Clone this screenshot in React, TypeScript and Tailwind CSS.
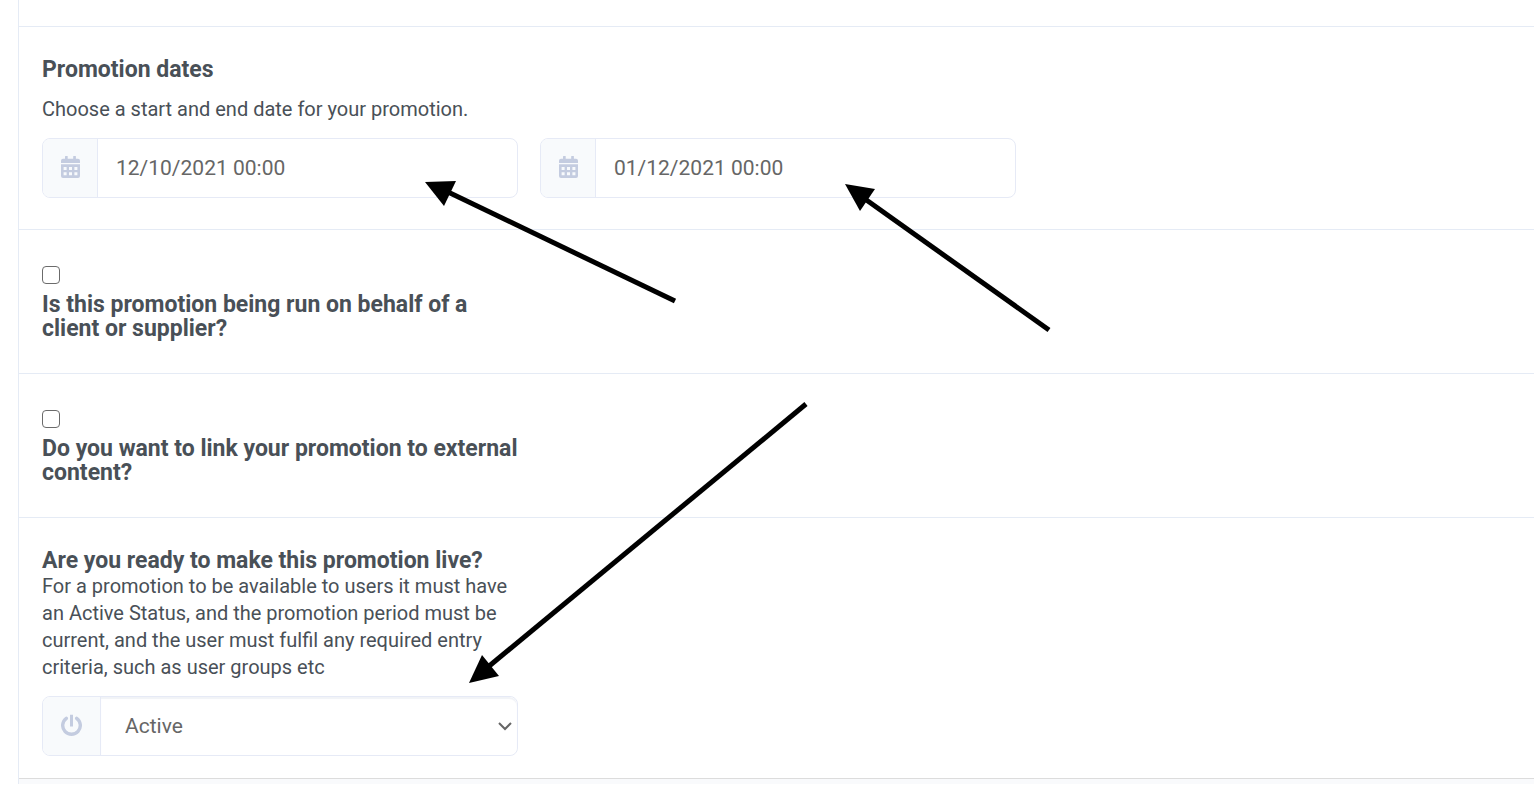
import React from "react";

const dates = [
  { id: "start-date", label: "Start date", value: "12/10/2021 00:00" },
  { id: "end-date", label: "End date", value: "01/12/2021 00:00" },
];

const questions = [
  {
    id: "behalf",
    label: "Is this promotion being run on behalf of a client or supplier?",
  },
  {
    id: "external",
    label: "Do you want to link your promotion to external content?",
  },
];

// tip and the two back corners of the head, then the shaft
const arrows = [
  { head: "425,182 456,181 444,206", x1: 448, y1: 192, x2: 675, y2: 301 },
  { head: "845,184 875,189 860,211", x1: 865, y1: 199, x2: 1049, y2: 330 },
  { head: "469,683 482,655 499,676", x1: 488, y1: 667, x2: 806, y2: 404 },
];

const CalendarIcon = () => (
  <svg width="19" height="22" viewBox="0 0 19 22" fill="currentColor" aria-hidden="true">
    <rect x="4" y="0" width="2.7" height="5" rx="0.6" />
    <rect x="12.2" y="0" width="2.7" height="5" rx="0.6" />
    <path d="M2 2.8h15a2 2 0 0 1 2 2V7H0V4.800a2 2 0 0 1 2-2z" />
    <path
      fillRule="evenodd"
      d="M0 8.200h19V20a2 2 0 0 1-2 2H2a2 2 0 0 1-2-2zM2.600 11v3h3v-3zM8 11v3h3v-3zM13.400 11v3h3v-3zM2.600 16.200v3h3v-3zM8 16.200v3h3v-3zM13.400 16.200v3h3v-3z"
    />
  </svg>
);

const PowerIcon = () => (
  <svg
    width="21"
    height="22"
    viewBox="0 0 21 22"
    fill="none"
    stroke="currentColor"
    strokeWidth="3.4"
    strokeLinecap="round"
    aria-hidden="true"
  >
    <path d="M5.300 4.300a8.800 8.800 0 1 0 10.400 0" />
    <path d="M10.500 2.300v8.700" strokeLinecap="square" strokeWidth="3" />
  </svg>
);

const Section = ({
  className = "",
  children,
}: {
  className?: string;
  children?: React.ReactNode;
}) => (
  <section
    className={`grid grid-cols-3 gap-x-[22px] border-b pl-[23px] pr-5 ${className}`}
  >
    {children}
  </section>
);

const Arrows = () => (
  <svg
    className="pointer-events-none absolute left-0 top-0"
    width="1534"
    height="785"
    viewBox="0 0 1534 785"
    aria-hidden="true"
  >
    {arrows.map((a) => (
      <g key={a.head}>
        <line x1={a.x1} y1={a.y1} x2={a.x2} y2={a.y2} stroke="#000" strokeWidth="5" />
        <polygon points={a.head} />
      </g>
    ))}
  </svg>
);

const App = () => {
  return (
    <div className="relative overflow-hidden bg-white font-['Roboto',sans-serif] text-[#495057]">
      <main className="ml-[18px] border-l border-[#e5ebf5]">
        <Section className="border-[#e5ebf5] pt-[26px]" />

        <Section className="border-[#e5ebf5] py-[31px]">
          <div className="col-span-3 mb-[15px]">
            <h2 className="text-[23px] leading-6 font-bold">Promotion dates</h2>
            <p className="mt-[14px] text-[20px] leading-[27px]">
              Choose a start and end date for your promotion.
            </p>
          </div>
          {dates.map((item) => (
            <div
              key={item.id}
              className="flex h-[60px] overflow-hidden rounded-lg border border-[#e6eaf6]"
            >
              <label
                htmlFor={item.id}
                aria-label={item.label}
                className="flex w-[55px] shrink-0 items-center justify-center border-r border-[#e6eaf6] bg-[#f8fafc] pb-0.5 text-[#c4cce0]"
              >
                <CalendarIcon />
              </label>
              <input
                id={item.id}
                type="text"
                defaultValue={item.value}
                className="w-full min-w-0 px-[18px] pt-0.5 text-[21px] text-[#666] outline-none"
              />
            </div>
          ))}
        </Section>

        {questions.map((item) => (
          <Section key={item.id} className="border-[#e5ebf5] pt-9 pb-8">
            <div className="flex flex-col items-start gap-[9px]">
              <input
                id={item.id}
                type="checkbox"
                className="h-[18px] w-[18px] appearance-none rounded border border-[#6b6b6b] bg-white checked:bg-[#6b6b6b]"
              />
              <label htmlFor={item.id} className="text-[23px] leading-6 font-bold">
                {item.label}
              </label>
            </div>
          </Section>
        ))}

        <Section className="border-[#dcdcdc] pt-[31px] pb-[22px]">
          <div>
            <h2 className="text-[23px] leading-6 font-bold">
              Are you ready to make this promotion live?
            </h2>
            <p className="text-[20px] leading-[27px]">
              For a promotion to be available to users it must have an Active
              Status, and the promotion period must be current, and the user
              must fulfil any required entry criteria, such as user groups etc
            </p>
            <div className="mt-[15px] flex h-[60px] overflow-hidden rounded-lg border border-[#e6eaf6]">
              <label
                htmlFor="status"
                aria-label="Status"
                className="flex w-[58px] shrink-0 items-center justify-center border-r border-[#e6eaf6] bg-[#f8fafc] pb-0.5 text-[#c4cce0]"
              >
                <PowerIcon />
              </label>
              <div className="grid w-full items-center">
                <select
                  id="status"
                  defaultValue="Active"
                  className="col-start-1 row-start-1 h-full w-full appearance-none rounded-r-lg bg-white px-6 pt-0.5 text-[21px] text-[#666] shadow-[inset_0_2px_1px_#f1f3f7] outline-none"
                >
                  <option>Active</option>
                  <option>Inactive</option>
                </select>
                <svg
                  className="pointer-events-none col-start-1 row-start-1 mr-[5px] justify-self-end"
                  width="14"
                  height="9"
                  viewBox="0 0 14 9"
                  fill="none"
                  stroke="#666"
                  strokeWidth="2"
                >
                  <path d="M1 1l6 6 6-6" />
                </svg>
              </div>
            </div>
          </div>
        </Section>
        <div className="h-[5px] bg-[#f9fafc]" />
      </main>
      <Arrows />
    </div>
  );
};

export default App;
